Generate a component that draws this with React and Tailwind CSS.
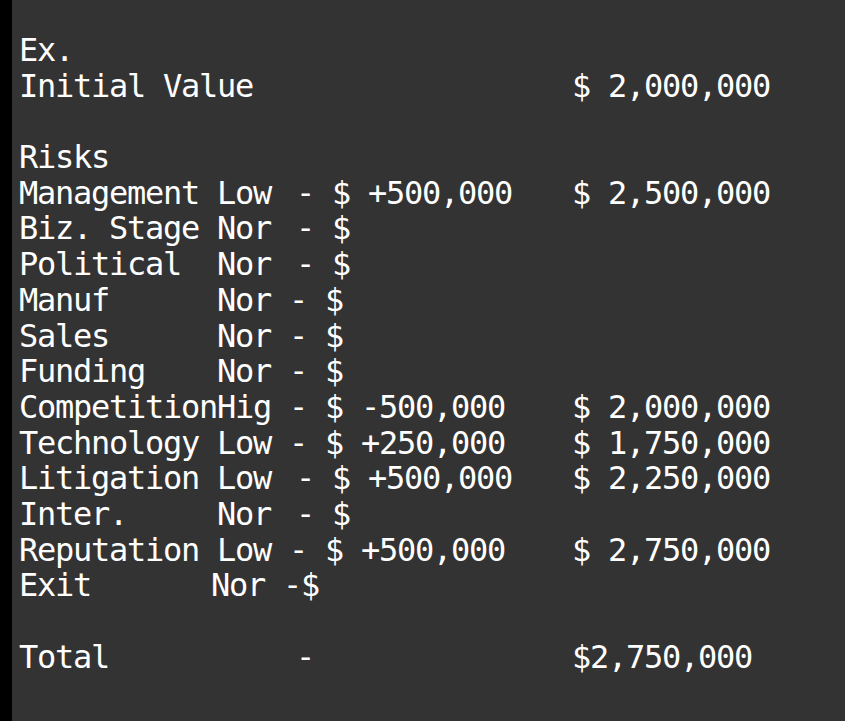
import React from 'react';

// extra gap seen after some of the level words
const Gap = () => <span className="inline-block w-[7px]" />;

const rows = [
  { left: 'Ex.' },
  { left: 'Initial Value', right: '$ 2,000,000' },
  { left: '' },
  { left: 'Risks' },
  { left: <>Management Low <Gap />- $ +500,000</>, right: '$ 2,500,000' },
  { left: <>Biz. Stage Nor <Gap />- $</> },
  { left: <>Political  Nor <Gap />- $</> },
  { left: 'Manuf      Nor - $' },
  { left: 'Sales      Nor - $' },
  { left: 'Funding    Nor - $' },
  { left: 'CompetitionHig - $ -500,000', right: '$ 2,000,000' },
  { left: 'Technology Low - $ +250,000', right: '$ 1,750,000' },
  { left: <>Litigation Low <Gap />- $ +500,000</>, right: '$ 2,250,000' },
  { left: <>Inter.     Nor <Gap />- $</> },
  { left: 'Reputation Low - $ +500,000', right: '$ 2,750,000' },
  { left: <>Exit<span className="inline-block w-[120px]" />Nor -$</> },
  { left: '' },
  { left: <>Total          <Gap />-</>, right: '$2,750,000' },
];

export default function App() {
  return (
    <div className="flex min-h-screen">
      <div className="w-[12px] shrink-0 bg-black" />
      <div className="flex-1 bg-[#333333] pt-[33px] pl-[7px] text-white text-[32px] leading-[35.7px] tracking-[-1.27px] font-['DejaVu_Sans_Mono',monospace]">
        {rows.map((row, i) => (
          <div key={i} className="flex h-[35.7px]">
            <div className="w-[553px] shrink-0 whitespace-pre">{row.left}</div>
            {row.right && <div className="whitespace-pre">{row.right}</div>}
          </div>
        ))}
      </div>
    </div>
  );
}
